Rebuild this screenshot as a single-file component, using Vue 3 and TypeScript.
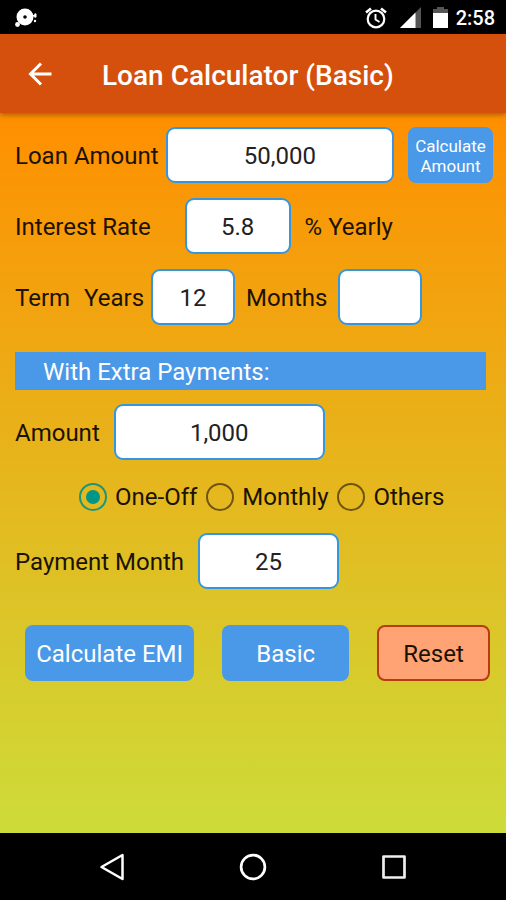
<script setup lang="ts">
import { ref } from 'vue'

type PaymentType = 'one-off' | 'monthly' | 'others'

const loanAmount = ref('50,000')
const interestRate = ref('5.8')
const years = ref('12')
const months = ref('')
const extraAmount = ref('1,000')
const paymentMonth = ref('25')
const paymentType = ref<PaymentType>('one-off')

const paymentTypes: { value: PaymentType; label: string }[] = [
  { value: 'one-off', label: 'One-Off' },
  { value: 'monthly', label: 'Monthly' },
  { value: 'others', label: 'Others' },
]

function reset(): void {
  for (const field of [loanAmount, interestRate, years, months, extraAmount, paymentMonth]) {
    field.value = ''
  }
  paymentType.value = 'one-off'
}
</script>

<template>
  <div class="screen">
    <div class="status-bar">
      <svg class="status-app" width="24" height="20" viewBox="0 0 24 20" fill="#fff" aria-hidden="true">
        <path fill-rule="evenodd" d="M10 0.500a8.5 8.5 0 1 1 0 17a8.5 8.5 0 0 1 0-17zM10 7.2a1.8 1.8 0 1 0 0 3.6a1.8 1.8 0 0 0 0-3.6z" />
        <circle cx="2.5" cy="16.500" r="2.4" />
        <path d="M17 7h2l1-2 1.500 1v3l-1.500 1-1-1.500h-2z" />
        <circle cx="20" cy="13" r="1.200" />
      </svg>
      <span class="status-icons">
        <svg width="22" height="22" viewBox="0 0 22 22" fill="none" stroke="#fff" stroke-width="2.200" aria-hidden="true">
          <circle cx="11" cy="12" r="8.300" />
          <path d="M10.500 7v5.500l4 2.500" stroke-width="1.900" />
          <path d="M1 5.500l5-4M21 5.500l-5-4" stroke-width="2.600" />
        </svg>
        <svg width="22" height="22" viewBox="0 0 22 22" aria-hidden="true">
          <path d="M22 0v21H1z" fill="#555" />
          <path d="M16.500 5.500V21H1z" fill="#fff" />
        </svg>
        <svg width="15" height="22" viewBox="0 0 15 22" aria-hidden="true">
          <path d="M4 0h7v2h4v4H0V2h4z" fill="#555" />
          <path d="M0 6h15v15H0z" fill="#fff" />
        </svg>
      </span>
      <span class="clock">2:58</span>
    </div>

    <header class="app-bar">
      <button class="back" type="button" aria-label="Back">
        <svg width="24" height="24" viewBox="0 0 24 24" fill="none" stroke="#fff" stroke-width="3" aria-hidden="true">
          <path d="M13 1.500L2.500 12L13 22.500M2.500 12H23.500" />
        </svg>
      </button>
      <h1>Loan Calculator (Basic)</h1>
    </header>

    <form class="content" @submit.prevent>
      <div class="row">
        <label for="loan">Loan Amount</label>
        <input id="loan" v-model="loanAmount" class="field grow" type="text" inputmode="decimal" />
        <button class="button small" type="button">Calculate Amount</button>
      </div>
      <div class="row">
        <label class="rate-label" for="rate">Interest Rate</label>
        <input id="rate" v-model="interestRate" class="field rate" type="text" inputmode="decimal" />
        <span class="suffix">% Yearly</span>
      </div>
      <div class="row">
        <span class="term">Term</span>
        <label for="years">Years</label>
        <input id="years" v-model="years" class="field term-field" type="text" inputmode="numeric" />
        <label class="months-label" for="months">Months</label>
        <input id="months" v-model="months" class="field term-field" type="text" inputmode="numeric" />
      </div>

      <h2>With Extra Payments:</h2>

      <div class="row">
        <label class="wide-gap" for="extra">Amount</label>
        <input id="extra" v-model="extraAmount" class="field extra" type="text" inputmode="decimal" />
      </div>
      <div class="radios" role="radiogroup" aria-label="Payment type">
        <label v-for="item in paymentTypes" :key="item.value" class="radio">
          <input v-model="paymentType" type="radio" name="payment-type" :value="item.value" />
          {{ item.label }}
        </label>
      </div>
      <div class="row">
        <label class="wide-gap" for="payment-month">Payment Month</label>
        <input id="payment-month" v-model="paymentMonth" class="field month" type="text" inputmode="numeric" />
      </div>

      <div class="actions">
        <button class="button" type="submit">Calculate EMI</button>
        <button class="button" type="button">Basic</button>
        <button class="button reset" type="button" @click="reset">Reset</button>
      </div>
    </form>

    <nav class="nav-bar" aria-label="System">
      <button type="button" aria-label="Back">
        <svg width="28" height="28" viewBox="0 0 28 28" fill="none" stroke="#fff" stroke-width="2.500" stroke-linejoin="round" aria-hidden="true">
          <path d="M24.500 2v24L3.500 14z" />
        </svg>
      </button>
      <button type="button" aria-label="Home">
        <svg width="28" height="28" viewBox="0 0 28 28" fill="none" stroke="#fff" stroke-width="2.700" aria-hidden="true">
          <circle cx="14" cy="14" r="11.900" />
        </svg>
      </button>
      <button type="button" aria-label="Recent apps">
        <svg width="28" height="28" viewBox="0 0 28 28" fill="none" stroke="#eee" stroke-width="2.700" stroke-linejoin="round" aria-hidden="true">
          <path d="M3.500 3.500h21v21h-21z" />
        </svg>
      </button>
    </nav>
  </div>
</template>

<style>
body {
  margin: 0;
}
</style>

<style scoped>
.screen {
  display: flex;
  flex-direction: column;
  min-height: 100vh;
  font-family: Roboto, "Liberation Sans", sans-serif;
  font-size: 24px;
  line-height: 28px;
  color: #1c1200;
}

.screen * {
  box-sizing: border-box;
}

button {
  margin: 0;
  padding: 0;
  border: 0;
  background: none;
  font: inherit;
  color: inherit;
}

svg {
  display: block;
}

.status-bar {
  display: flex;
  align-items: center;
  height: 34px;
  padding: 2px 11px 0 15px;
  background: #000;
  color: #fff;
}

.status-icons {
  display: flex;
  gap: 12px;
  margin-left: auto;
}

.clock {
  margin-left: 8px;
  font-size: 20px;
  font-weight: 500;
}

.app-bar {
  position: relative;
  display: flex;
  align-items: center;
  height: 79px;
  padding: 0 28px;
  background: #d5500c;
  box-shadow: 0 2px 5px rgba(90, 50, 0, 0.5);
  color: #fff;
}

h1 {
  margin: 4px 0 0 50px;
  font-size: 28px;
  font-weight: 500;
  line-height: 32px;
}

.content {
  flex: 1;
  padding: 14px 13px 28px 15px;
  background: linear-gradient(#ff8f00, #cddc39);
}

.row {
  display: flex;
  align-items: center;
  gap: 7px;
  margin-bottom: 15px;
  white-space: nowrap;
}

.row label,
.row span {
  padding-top: 2px;
}

.field {
  min-width: 0;
  height: 56px;
  padding: 2px 8px 0;
  border: 2px solid #3496e0;
  border-radius: 9px;
  background: #fff;
  font: inherit;
  color: #222;
  text-align: center;
}

.grow {
  flex: 1;
}

.rate-label {
  margin-right: 27px;
}

.rate {
  width: 106px;
}

.term,
.wide-gap {
  margin-right: 7px;
}

.suffix {
  margin-left: 7px;
}

.term-field {
  width: 84px;
}

.months-label {
  margin: 0 4px;
}

.extra {
  width: 211px;
}

.month {
  width: 141px;
}

.button {
  height: 56px;
  padding-top: 2px;
  border-radius: 8px;
  background: #4a98e8;
  color: #fff;
}

.small {
  width: 85px;
  margin-left: 7px;
  font-size: 17px;
  line-height: 20px;
  white-space: normal;
}

h2 {
  margin: 27px 7px 14px 0;
  padding: 6px 28px 4px;
  background: #4a98e8;
  color: #fff;
  font-size: 24px;
  font-weight: 400;
  line-height: 28px;
}

.radios {
  display: flex;
  gap: 9px;
  margin: 23px 0 22px 64px;
  white-space: nowrap;
}

.radio {
  display: flex;
  align-items: center;
  gap: 8px;
}

.radio input {
  display: grid;
  place-content: center;
  width: 28px;
  height: 28px;
  margin: 0;
  border: 2px solid #6f5410;
  border-radius: 50%;
  appearance: none;
}

.radio input:checked {
  border-color: #1c9678;
}

.radio input:checked::before {
  width: 14px;
  height: 14px;
  border-radius: 50%;
  background: #009688;
  content: "";
}

.actions {
  display: grid;
  grid-template-columns: 12fr 9fr 8fr;
  gap: 28px;
  margin: 36px 3px 0 10px;
}

.reset {
  border: 2px solid #b83c10;
  background: #ffa274;
  color: #1c1200;
}

.nav-bar {
  display: flex;
  justify-content: center;
  align-items: center;
  gap: 113px;
  height: 67px;
  background: #000;
}
</style>
